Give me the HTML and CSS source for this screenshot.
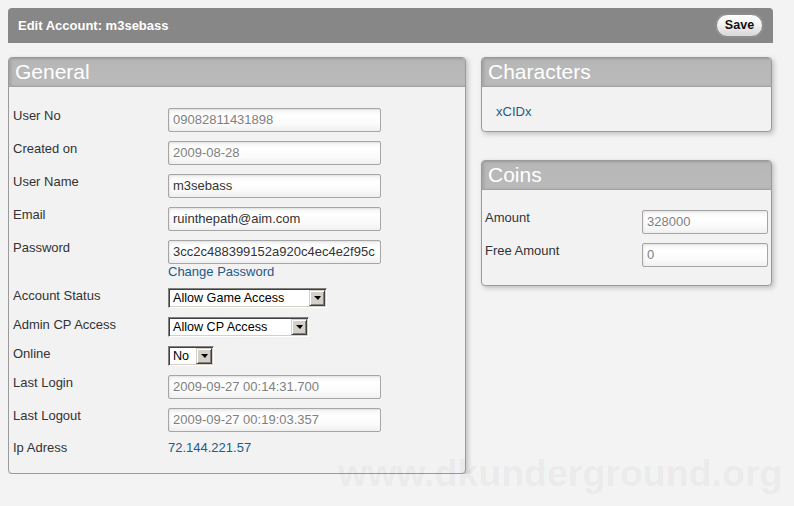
FILE: index.html
```html
<!DOCTYPE html>
<html>
<head>
<meta charset="utf-8">
<link rel="stylesheet" href="styles.css">
</head>
<body>
<div class="topbar">
  <span class="topbar-title">Edit Account: m3sebass</span>
  <button class="save-btn">Save</button>
</div>
<div class="columns">
  <div class="panel panel-general">
    <div class="panel-head">General</div>
    <div class="panel-body general-body">
      <div class="row"><div class="lbl">User No</div><div class="field"><div class="input ro">09082811431898</div></div></div>
      <div class="row"><div class="lbl">Created on</div><div class="field"><div class="input ro">2009-08-28</div></div></div>
      <div class="row"><div class="lbl">User Name</div><div class="field"><div class="input">m3sebass</div></div></div>
      <div class="row"><div class="lbl">Email</div><div class="field"><div class="input">ruinthepath@aim.com</div></div></div>
      <div class="row"><div class="lbl">Password</div><div class="field"><div class="input">3cc2c488399152a920c4ec4e2f95c</div><a class="link block-link">Change Password</a></div></div>
      <div class="row"><div class="lbl">Account Status</div><div class="field"><div class="select w-status"><span class="sel-text">Allow Game Access</span><span class="sel-btn"><span class="tri"></span></span></div></div></div>
      <div class="row"><div class="lbl">Admin CP Access</div><div class="field"><div class="select w-admin"><span class="sel-text">Allow CP Access</span><span class="sel-btn"><span class="tri"></span></span></div></div></div>
      <div class="row"><div class="lbl">Online</div><div class="field"><div class="select w-online"><span class="sel-text">No</span><span class="sel-btn"><span class="tri"></span></span></div></div></div>
      <div class="row"><div class="lbl">Last Login</div><div class="field"><div class="input ro">2009-09-27 00:14:31.700</div></div></div>
      <div class="row tight"><div class="lbl">Last Logout</div><div class="field"><div class="input ro">2009-09-27 00:19:03.357</div></div></div>
      <div class="row last"><div class="lbl">Ip Adress</div><div class="field"><a class="link">72.144.221.57</a></div></div>
    </div>
  </div>
  <div class="side">
    <div class="panel">
      <div class="panel-head">Characters</div>
      <div class="panel-body chars-body"><a class="link">xCIDx</a></div>
    </div>
    <div class="panel">
      <div class="panel-head">Coins</div>
      <div class="panel-body coins-body">
        <div class="row"><div class="lbl">Amount</div><div class="field"><div class="input ro small">328000</div></div></div>
        <div class="row last"><div class="lbl">Free Amount</div><div class="field"><div class="input ro small">0</div></div></div>
      </div>
    </div>
  </div>
</div>
<div class="watermark">www.dkunderground.org</div>
</body>
</html>
```
FILE: styles.css
```css
body {
  margin: 8px;
  background: #f3f3f3;
  font-family: "Liberation Sans", Arial, sans-serif;
  font-size: 13px;
  color: #333;
}

.topbar {
  width: 765px;
  height: 35px;
  box-sizing: border-box;
  background: #878787;
  border-radius: 4px 4px 0 0;
  display: flex;
  align-items: center;
  justify-content: space-between;
  padding: 0 10px 0 10px;
}

.topbar-title {
  color: #fff;
  font-weight: bold;
  font-size: 13px;
}

.save-btn {
  width: 47px;
  height: 23px;
  margin-top: -1px;
  border: 1px solid #8c8c8c;
  border-radius: 12px;
  background: linear-gradient(#ffffff, #f2f2f2 45%, #d6d6d6);
  box-shadow: inset 0 0 1px #fff, 0 0 1px rgba(255,255,255,0.5);
  font-family: "Liberation Sans", Arial, sans-serif;
  font-weight: bold;
  font-size: 12.5px;
  color: #111;
  padding: 0;
  letter-spacing: 0.1px;
}

.columns {
  display: flex;
  align-items: flex-start;
  gap: 15px;
  margin-top: 14px;
}

.panel {
  border: 1px solid #9a9a9a;
  border-radius: 4px;
  background: #f2f2f2;
  box-shadow: 2px 2px 5px rgba(0, 0, 0, 0.22);
  overflow: hidden;
}

.panel-general {
  width: 458px;
  box-sizing: border-box;
}

.side {
  width: 291px;
  display: flex;
  flex-direction: column;
  gap: 28px;
}

.panel-head {
  height: 29px;
  line-height: 28px;
  box-sizing: border-box;
  background: linear-gradient(#a8a8a8, #b7b7b7 3px, #bababa);
  box-shadow: inset 2px 0 3px rgba(0, 0, 0, 0.12);
  border-bottom: 1px solid #a4a4a4;
  color: #fff;
  font-size: 21px;
  padding-left: 6px;
}

.general-body {
  padding: 21px 4px 17px 4px;
}

.chars-body {
  padding: 17px 14px 11px 14px;
  line-height: 16px;
}

.coins-body {
  padding: 20px 4px 18px 3px;
}

.row {
  display: flex;
  align-items: flex-start;
  margin-bottom: 9px;
}

.row.tight {
  margin-bottom: 8px;
}

.row.last {
  margin-bottom: 0;
}

.lbl {
  width: 155px;
  flex: none;
  line-height: 15px;
  color: #333;
}

.coins-body .lbl {
  width: 157px;
}

.field {
  display: flex;
  flex-direction: column;
  align-items: flex-start;
}

.input {
  width: 213px;
  height: 24px;
  box-sizing: border-box;
  border: 1px solid #a6a6a6;
  border-radius: 2px;
  background: linear-gradient(#f4f4f4, #ffffff 30%, #fafafa 70%, #f0f0f0);
  box-shadow: inset 1px 1px 2px rgba(0, 0, 0, 0.08);
  padding: 0 4px;
  line-height: 22px;
  font-size: 13px;
  color: #333;
  white-space: nowrap;
  overflow: hidden;
}

.input.ro {
  color: #808080;
}

.input.small {
  width: 126px;
}

.link {
  color: #225a8a;
  text-decoration: none;
  line-height: 16px;
}

.block-link {
  display: block;
  line-height: 15px;
}

.select {
  height: 20px;
  box-sizing: border-box;
  display: flex;
  align-items: stretch;
  background: #fff;
  border-top: 1px solid #808080;
  border-left: 1px solid #808080;
  border-bottom: 1px solid #ffffff;
  border-right: 1px solid #ffffff;
  box-shadow: inset 1px 1px 0 #404040, inset -1px -1px 0 #d4d0c8;
  padding: 1px;
}

.w-status { width: 159px; }
.w-admin { width: 141px; }
.w-online { width: 46px; }

.sel-text {
  flex: 1;
  font-size: 12.6px;
  line-height: 16px;
  padding-left: 3px;
  color: #000;
  white-space: nowrap;
  overflow: hidden;
}

.sel-btn {
  width: 16px;
  flex: none;
  box-sizing: border-box;
  background: #d4d0c8;
  border-top: 1px solid #d4d0c8;
  border-left: 1px solid #d4d0c8;
  border-right: 1px solid #404040;
  border-bottom: 1px solid #404040;
  box-shadow: inset 1px 1px 0 #ffffff, inset -1px -1px 0 #808080;
  display: flex;
  align-items: center;
  justify-content: center;
}

.tri {
  width: 0;
  height: 0;
  border-left: 4px solid transparent;
  border-right: 3px solid transparent;
  border-top: 4px solid #000;
  margin-left: 1px;
}

.watermark {
  position: absolute;
  left: 338px;
  top: 455px;
  font-family: "Liberation Sans", Arial, sans-serif;
  font-weight: bold;
  font-size: 37.5px;
  line-height: 37px;
  color: rgba(0, 0, 0, 0.055);
  pointer-events: none;
  white-space: nowrap;
}
```
